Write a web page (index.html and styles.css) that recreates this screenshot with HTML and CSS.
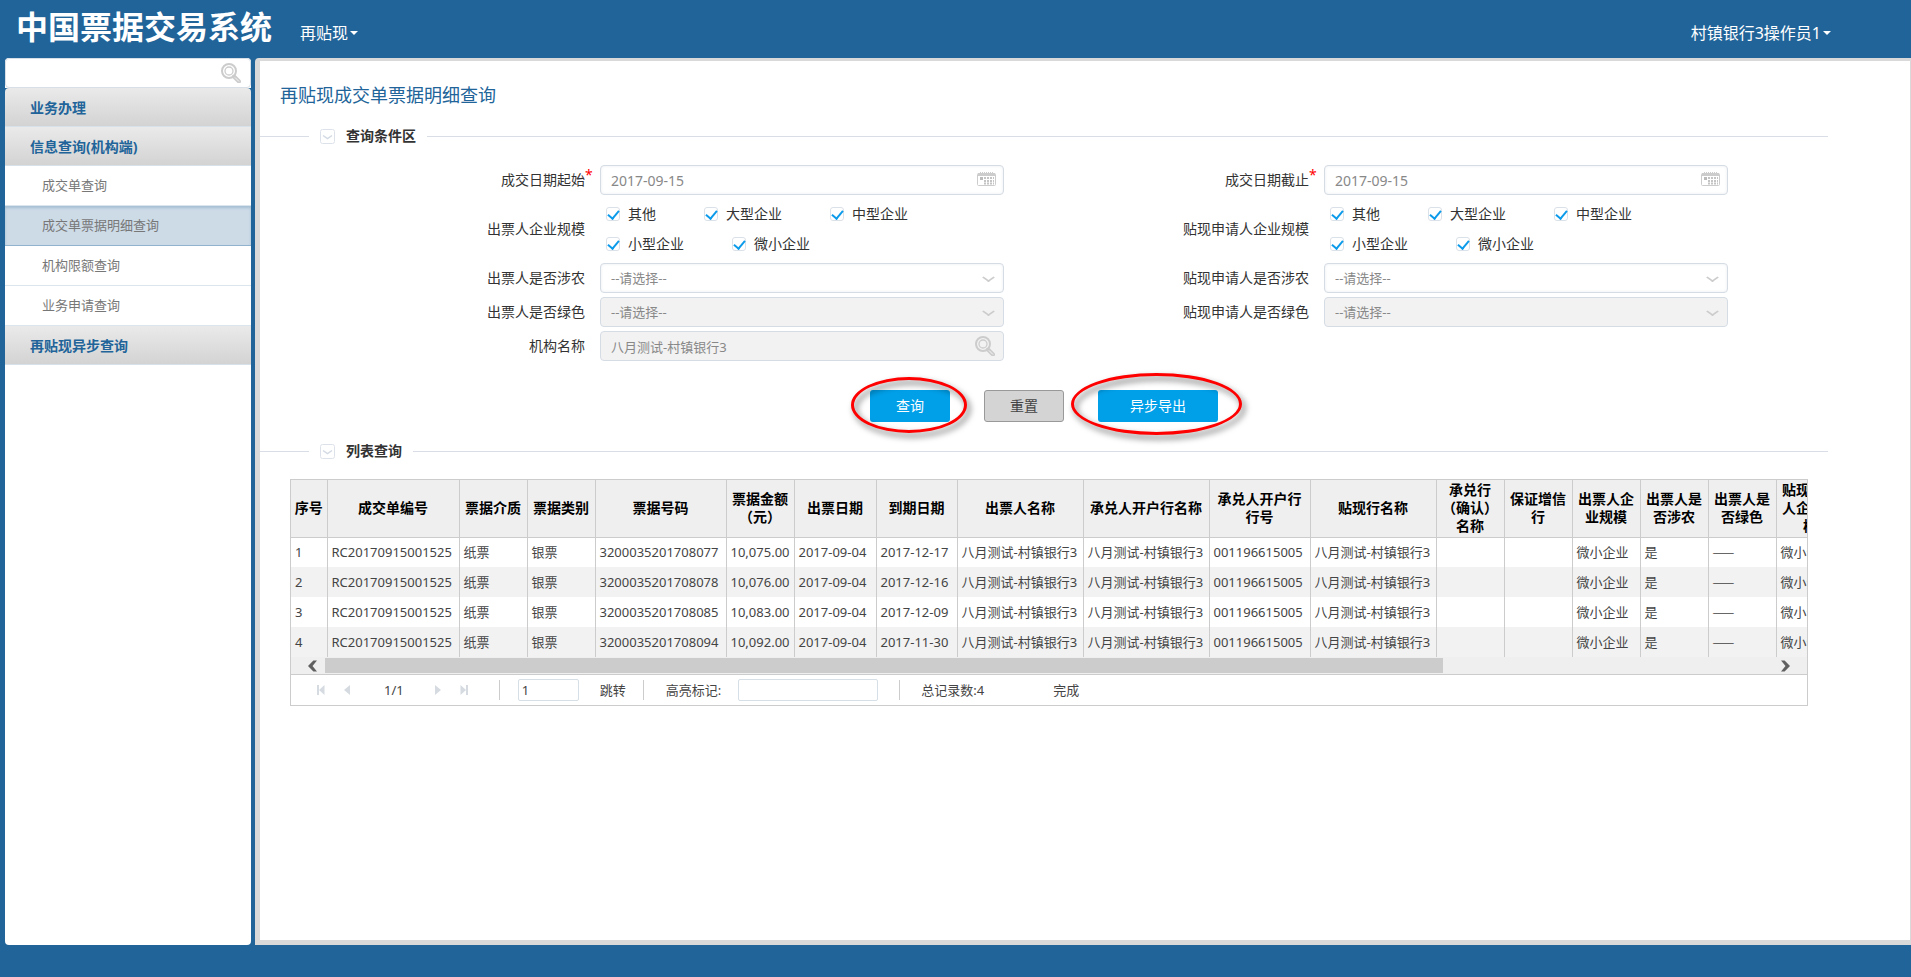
FILE: index.html
```html
<!DOCTYPE html>
<html lang="zh-CN">
<head>
<meta charset="utf-8">
<title>中国票据交易系统</title>
<link rel="stylesheet" href="styles.css">
</head>
<body>
<svg class="defs" aria-hidden="true">
  <symbol id="mag" viewBox="0 0 20 20"><g fill="none" stroke="#ccc"><circle cx="8" cy="8" r="7" stroke-width="2"/><circle cx="8" cy="8" r="4" stroke-width="1.300"/><path d="M13 13.500l5 5" stroke-width="4" stroke-linecap="round"/><path d="M14 14.500l4 4" stroke="#f6f6f6" stroke-width="1"/></g></symbol>
  <symbol id="cal" viewBox="0 0 19 14"><rect x=".5" y="1.500" width="18" height="12" rx="1" fill="none" stroke="#ccc"/><path d="M1 2.500h17" stroke="#ccc" stroke-width="3"/><path d="M3 .5h14" stroke="#ccc" stroke-dasharray="1 1"/><path d="M3 6.500h3" stroke="#bbb" stroke-width="3"/><path d="M7 6h10M7 9h10M7 11.500h10" stroke="#c4c4c4" stroke-width="2" stroke-dasharray="2 1"/></symbol>
  <symbol id="fold" viewBox="0 0 15 15"><rect x=".5" y=".5" width="14" height="14" rx="2" fill="#fff" stroke="#dde2ea"/><path d="M3 6.500l4.500 3 4.500-3" fill="none" stroke="#d3dae3" stroke-width="1.500"/></symbol>
  <symbol id="tri" viewBox="0 0 8 12"><path d="M7 1v10L1 6z" fill="#d5dbe1"/></symbol>
  <symbol id="end" viewBox="0 0 8 12"><path d="M7.500 1v10L2 6zM0 1h2v10H0z" fill="#d5dbe1"/></symbol>
  <symbol id="arrow" viewBox="0 0 10 12"><path d="M6 0h4L5 6l5 6H6L0 6z" fill="#606060"/></symbol>
</svg>

<header class="top">
  <h1 class="brand">中国票据交易系统</h1>
  <button class="menu" type="button">再贴现<span class="caret"></span></button>
  <button class="menu user" type="button">村镇银行3操作员1<span class="caret"></span></button>
</header>

<div class="body">
  <aside class="side">
    <label class="finder"><input type="text" aria-label="菜单搜索"><svg class="mag"><use href="#mag"/></svg></label>
    <nav class="nav">
      <a class="group" href="#">业务办理</a>
      <a class="group" href="#">信息查询(机构端)</a>
      <a class="leaf" href="#">成交单查询</a>
      <a class="leaf active" href="#">成交单票据明细查询</a>
      <a class="leaf" href="#">机构限额查询</a>
      <a class="leaf" href="#">业务申请查询</a>
      <a class="group" href="#">再贴现异步查询</a>
    </nav>
  </aside>

  <main class="main">
    <h2 class="title">再贴现成交单票据明细查询</h2>

    <h3 class="legend"><svg class="fold"><use href="#fold"/></svg>查询条件区</h3>
    <form class="form">
      <div class="col">
        <div class="field"><label class="name" for="d1">成交日期起始<sup class="req">*</sup></label><div class="control"><input id="d1" class="box date" type="text" value="2017-09-15"><svg class="cal"><use href="#cal"/></svg></div></div>
        <div class="field"><span class="name">出票人企业规模</span><div class="checks">
          <label class="check"><input type="checkbox" checked>其他</label>
          <label class="check"><input type="checkbox" checked>大型企业</label>
          <label class="check"><input type="checkbox" checked>中型企业</label>
          <label class="check"><input type="checkbox" checked>小型企业</label>
          <label class="check"><input type="checkbox" checked>微小企业</label>
        </div></div>
        <div class="field"><label class="name" for="s1">出票人是否涉农</label><div class="control pick"><select id="s1" class="box"><option>--请选择--</option></select></div></div>
        <div class="field"><label class="name" for="s2">出票人是否绿色</label><div class="control pick"><select id="s2" class="box" disabled><option>--请选择--</option></select></div></div>
        <div class="field"><label class="name" for="o1">机构名称</label><div class="control"><input id="o1" class="box" type="text" value="八月测试-村镇银行3" disabled><svg class="mag"><use href="#mag"/></svg></div></div>
      </div>
      <div class="col">
        <div class="field"><label class="name" for="d2">成交日期截止<sup class="req">*</sup></label><div class="control"><input id="d2" class="box date" type="text" value="2017-09-15"><svg class="cal"><use href="#cal"/></svg></div></div>
        <div class="field"><span class="name">贴现申请人企业规模</span><div class="checks">
          <label class="check"><input type="checkbox" checked>其他</label>
          <label class="check"><input type="checkbox" checked>大型企业</label>
          <label class="check"><input type="checkbox" checked>中型企业</label>
          <label class="check"><input type="checkbox" checked>小型企业</label>
          <label class="check"><input type="checkbox" checked>微小企业</label>
        </div></div>
        <div class="field"><label class="name" for="s3">贴现申请人是否涉农</label><div class="control pick"><select id="s3" class="box"><option>--请选择--</option></select></div></div>
        <div class="field"><label class="name" for="s4">贴现申请人是否绿色</label><div class="control pick"><select id="s4" class="box" disabled><option>--请选择--</option></select></div></div>
      </div>
    </form>

    <div class="actions">
      <span class="ringed"><button class="btn" type="button">查询</button><span class="ring"></span></span>
      <button class="btn reset" type="button">重置</button>
      <span class="ringed wide"><button class="btn" type="button">异步导出</button><span class="ring"></span></span>
    </div>

    <h3 class="legend"><svg class="fold"><use href="#fold"/></svg>列表查询</h3>
    <section class="list">
      <div class="scroller">
        <table class="grid">
          <colgroup><col class="w36"><col class="w132"><col class="w68"><col class="w68"><col class="w131"><col class="w68"><col class="w82"><col class="w81"><col class="w126"><col class="w126"><col class="w101"><col class="w126"><col class="w68"><col class="w68"><col class="w68"><col class="w68"><col class="w68"><col class="w68"></colgroup>
          <thead><tr><th>序号</th><th>成交单编号</th><th>票据介质</th><th>票据类别</th><th>票据号码</th><th>票据金额<br>（元）</th><th>出票日期</th><th>到期日期</th><th>出票人名称</th><th>承兑人开户行名称</th><th>承兑人开户行<br>行号</th><th>贴现行名称</th><th>承兑行<br>（确认）<br>名称</th><th>保证增信行</th><th>出票人企业规模</th><th>出票人是否涉农</th><th>出票人是否绿色</th><th>贴现申请人企业规模</th></tr></thead>
          <tbody>
            <tr><td>1</td><td>RC20170915001525</td><td>纸票</td><td>银票</td><td>3200035201708077</td><td>10,075.00</td><td>2017-09-04</td><td>2017-12-17</td><td>八月测试-村镇银行3</td><td>八月测试-村镇银行3</td><td>001196615005</td><td>八月测试-村镇银行3</td><td></td><td></td><td>微小企业</td><td>是</td><td class="none">——</td><td>微小企业</td></tr>
            <tr><td>2</td><td>RC20170915001525</td><td>纸票</td><td>银票</td><td>3200035201708078</td><td>10,076.00</td><td>2017-09-04</td><td>2017-12-16</td><td>八月测试-村镇银行3</td><td>八月测试-村镇银行3</td><td>001196615005</td><td>八月测试-村镇银行3</td><td></td><td></td><td>微小企业</td><td>是</td><td class="none">——</td><td>微小企业</td></tr>
            <tr><td>3</td><td>RC20170915001525</td><td>纸票</td><td>银票</td><td>3200035201708085</td><td>10,083.00</td><td>2017-09-04</td><td>2017-12-09</td><td>八月测试-村镇银行3</td><td>八月测试-村镇银行3</td><td>001196615005</td><td>八月测试-村镇银行3</td><td></td><td></td><td>微小企业</td><td>是</td><td class="none">——</td><td>微小企业</td></tr>
            <tr><td>4</td><td>RC20170915001525</td><td>纸票</td><td>银票</td><td>3200035201708094</td><td>10,092.00</td><td>2017-09-04</td><td>2017-11-30</td><td>八月测试-村镇银行3</td><td>八月测试-村镇银行3</td><td>001196615005</td><td>八月测试-村镇银行3</td><td></td><td></td><td>微小企业</td><td>是</td><td class="none">——</td><td>微小企业</td></tr>
          </tbody>
        </table>
      </div>
      <div class="bar">
        <svg class="arrow"><use href="#arrow"/></svg>
        <div class="track"><div class="thumb"></div></div>
        <svg class="arrow flip"><use href="#arrow"/></svg>
      </div>
      <div class="pager">
        <div class="steps">
          <button type="button" aria-label="首页"><svg><use href="#end"/></svg></button>
          <button type="button" aria-label="上一页"><svg><use href="#tri"/></svg></button>
          <span class="count">1/1</span>
          <button class="flip" type="button" aria-label="下一页"><svg><use href="#tri"/></svg></button>
          <button class="flip" type="button" aria-label="末页"><svg><use href="#end"/></svg></button>
        </div>
        <div class="jump"><input type="text" value="1" aria-label="页码"><button type="button">跳转</button></div>
        <div class="mark"><label for="mk">高亮标记:</label><input id="mk" type="text"></div>
        <div class="status"><span>总记录数:4</span><span>完成</span></div>
      </div>
    </section>
  </main>
</div>
</body>
</html>
```
FILE: styles.css
```css
* { box-sizing: border-box; }

body {
  margin: 0;
  min-height: 100vh;
  display: flex;
  flex-direction: column;
  background: #216499;
  color: #333;
  font: 14px/20px "Noto Sans", "Noto Sans CJK SC", sans-serif;
}

button, input, select { font: inherit; color: inherit; }
button { padding: 0; border: 0; background: none; }
a { text-decoration: none; }
svg { display: block; flex: none; }
.defs { position: absolute; width: 0; height: 0; }

/* header */
.top {
  display: flex;
  align-items: center;
  height: 58px;
  padding: 8px 80px 0 16px;
  color: #fff;
}
.brand { margin: 0 28px 16px 0; font-size: 32px; line-height: 38px; font-weight: 700; font-family: "Noto Sans CJK SC", sans-serif; }
.menu { display: flex; align-items: center; gap: 2px; font-size: 16px; }
.user { margin-left: auto; }
.caret { border: 4px solid transparent; border-top-color: #fff; border-bottom: 0; }

.body { flex: 1; display: flex; gap: 4px; padding: 0 0 32px 5px; }

/* sidebar */
.side { flex: none; width: 246px; background: #fff; border-radius: 4px; }
.finder {
  display: flex;
  align-items: center;
  height: 30px;
  padding: 0 9px;
  border: 1px solid #d9dfe6;
  border-radius: 4px;
  background: #fff;
}
.finder input { flex: 1; min-width: 0; border: 0; outline: 0; }
.mag { width: 20px; height: 20px; }
.nav { background: #216499; }
.group, .leaf { display: flex; align-items: center; }
.group {
  height: 39px;
  padding: 2px 0 0 25px;
  border-bottom: 1px solid #d6e1ea;
  background: linear-gradient(#eaeaea, #d3d3d3);
  color: #216499;
  font-weight: bold;
}
.group:first-child { border-radius: 4px 4px 0 0; }
.leaf {
  height: 40px;
  padding: 0 0 2px 37px;
  border-bottom: 1px solid #dbe5ee;
  background: #fff;
  color: #777;
  font-size: 13px;
}
.leaf.active {
  background: #cddbe7;
  border-bottom-color: #92b3cd;
  box-shadow: inset 0 2px 3px #a5bfd3;
}

/* content */
.main {
  flex: 1;
  min-width: 0;
  background: #fff;
  border: 5px solid #d9d9d9;
  border-top-width: 3px;
  border-right-width: 1px;
  border-top-left-radius: 4px;
}
.title { margin: 22px 0 0 20px; font-size: 18px; line-height: 24px; font-weight: normal; color: #216499; }
.legend {
  display: flex;
  align-items: center;
  gap: 11px;
  margin: 19px 82px 0 0;
  font-size: 14px;
  line-height: 20px;
}
.legend::before, .legend::after { content: ""; height: 1px; background: #d9dee6; }
.legend::before { width: 49px; }
.legend::after { flex: 1; }
.fold { width: 15px; height: 15px; }

.form { display: grid; grid-template-columns: 1fr 1fr; margin: 19px 182px 0 20px; }
.col { display: flex; flex-direction: column; gap: 4px; }
.field { display: grid; grid-template-columns: 305fr 404fr; column-gap: 15px; align-items: center; }
.name { position: relative; justify-self: end; }
.req { position: absolute; left: 100%; top: -5px; color: #f00; font-size: 14px; line-height: 20px; }
.control { position: relative; }
.box {
  display: block;
  width: 100%;
  height: 30px;
  padding: 0 10px;
  border: 1px solid #d6dce4;
  border-radius: 4px;
  outline: 0;
  background: #fff;
  color: #888;
  font-size: 13px;
  box-shadow: inset 0 0 3px #e6eaef;
  appearance: none;
}
.date { font-size: 14px; }
.box:disabled { background: #f2f2f2; color: #888; opacity: 1; box-shadow: none; }
.control .cal, .control .mag { position: absolute; top: 5px; right: 9px; }
.control .cal { width: 19px; height: 14px; top: 7px; right: 8px; }
.pick::after {
  content: "";
  position: absolute;
  top: 10px;
  right: 11px;
  width: 7px;
  height: 7px;
  border: solid #ccc;
  border-width: 0 2px 2px 0;
  transform: scaleY(.7) rotate(45deg);
}
.checks { display: flex; flex-wrap: wrap; column-gap: 48px; padding: 0 60px 0 6px; }
.check { display: flex; align-items: center; gap: 8px; height: 30px; }
.check input {
  appearance: none;
  display: flex;
  justify-content: center;
  width: 14px;
  height: 14px;
  margin: 0;
  border: 1px solid #dbe1e9;
  border-radius: 3px;
}
.check input:checked::after {
  content: "";
  width: 5px;
  height: 9px;
  border: solid #0c9bea;
  border-width: 0 2px 2px 0;
  transform: rotate(40deg);
}

.actions { display: flex; gap: 34px; margin: 29px 0 0 610px; }
.ringed { position: relative; }
.btn { display: block; width: 80px; height: 32px; border-radius: 3px; background: #00a0e9; color: #fff; }
.wide .btn { width: 120px; }
.reset { border: 1px solid #999; background: #d4d4d4; color: #444; }
.ring {
  position: absolute;
  inset: -13px -17px -11px -19px;
  border: 3px solid #f00;
  border-radius: 50%;
  filter: drop-shadow(3px 4px 3px rgba(0, 0, 0, .6));
  pointer-events: none;
}
.wide .ring { inset: -17px -24px -13px -27px; }

/* result list */
.list { margin: 18px 102px 0 30px; border: 1px solid #ccc; }
.scroller { overflow: hidden; }
.grid { width: 1553px; table-layout: fixed; border-collapse: collapse; }
.grid th, .grid td { border-right: 1px solid #ccc; white-space: nowrap; }
.grid th {
  height: 57px;
  padding: 0 4px;
  border-bottom: 1px solid #ccc;
  background: #efefef;
  color: #000;
  line-height: 18px;
  white-space: normal;
}
.grid th:nth-child(-n+12) { padding: 0; }
.grid td { height: 30px; padding: 0 0 0 4px; color: #444; font-size: 13px; }
.grid tr:nth-child(even) td { background: #f2f2f2; }
.grid .none { font-family: "Noto Sans CJK SC", sans-serif; }
.w36 { width: 36px; } .w68 { width: 68px; } .w81 { width: 81px; } .w82 { width: 82px; }
.w101 { width: 101px; } .w126 { width: 126px; } .w131 { width: 131px; } .w132 { width: 132px; }

.bar {
  display: flex;
  align-items: center;
  gap: 8px;
  height: 18px;
  padding: 0 17px;
  border-bottom: 1px solid #ccc;
  background: #efefef;
}
.arrow { width: 9px; height: 12px; }
.flip { transform: scaleX(-1); }
.track { flex: 1; }
.thumb { width: 77.2%; height: 15px; background: #ccc; }

.pager { display: flex; align-items: center; height: 30px; padding-left: 26px; color: #444; font-size: 13px; }
.pager > div { display: flex; align-items: center; height: 20px; }
.pager > div + div { border-left: 1px solid #ccc; }
.pager svg { width: 8px; height: 12px; }
.steps { gap: 18px; padding-right: 31px; }
.count { padding: 0 12px 0 15px; }
.pager input { height: 22px; padding: 0 3px; border: 1px solid #d6dfe6; border-radius: 2px; outline: 0; }
.jump { gap: 21px; padding: 0 17px 0 18px; }
.jump input { width: 61px; }
.mark { gap: 17px; padding: 0 21px 0 22px; }
.mark input { width: 140px; }
.status { gap: 69px; padding-left: 21px; }
```
